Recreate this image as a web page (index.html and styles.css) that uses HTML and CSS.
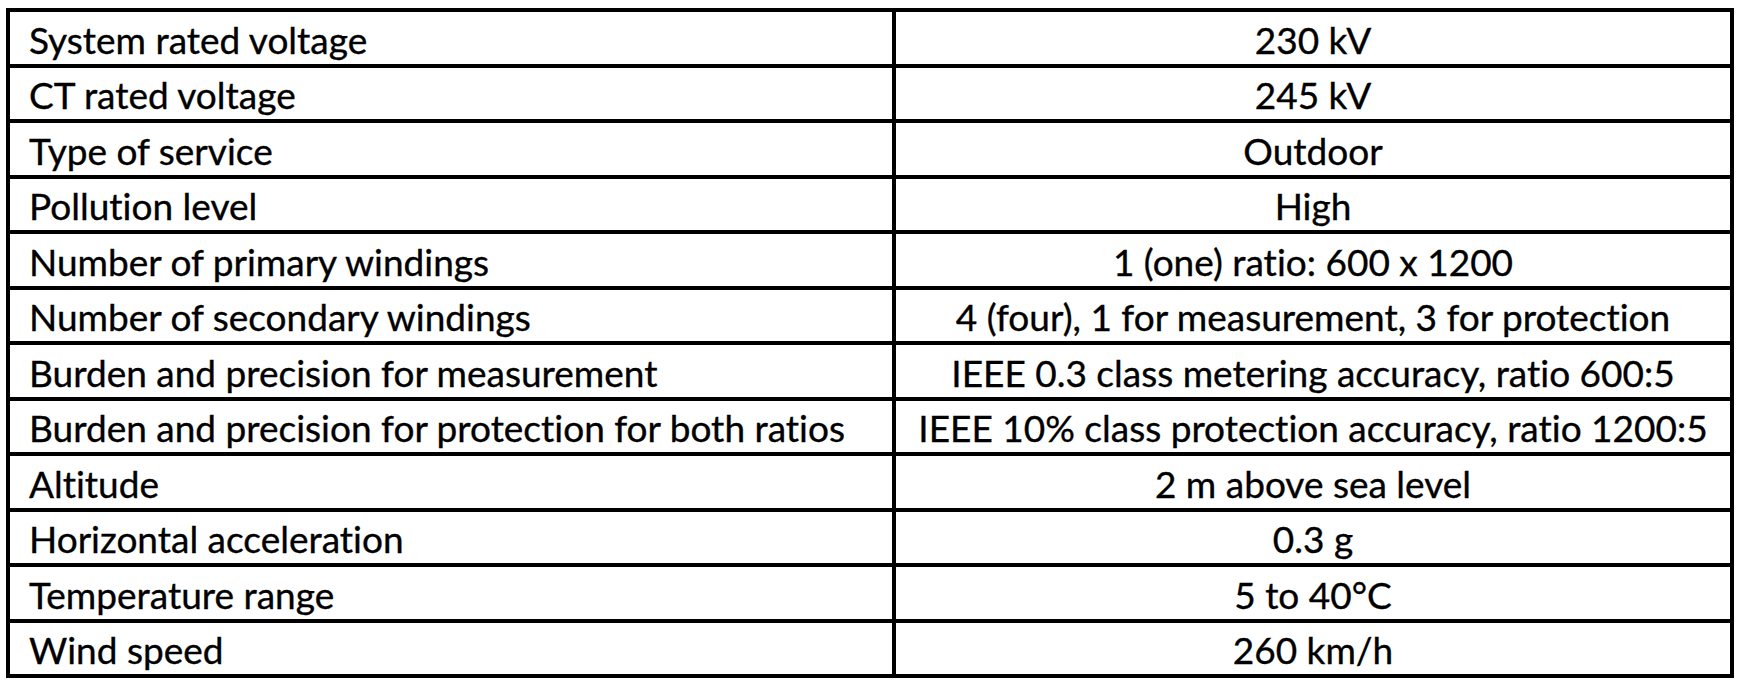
FILE: index.html
```html
<!DOCTYPE html>
<html lang="en">
<head>
<meta charset="utf-8">
<title>CT specifications</title>
<link rel="stylesheet" href="styles.css">
</head>
<body>
<table class="spec">
  <tbody>
    <tr><td class="label">System rated voltage</td><td class="value">230 kV</td></tr>
    <tr><td class="label">CT rated voltage</td><td class="value">245 kV</td></tr>
    <tr><td class="label">Type of service</td><td class="value">Outdoor</td></tr>
    <tr><td class="label">Pollution level</td><td class="value">High</td></tr>
    <tr><td class="label">Number of primary windings</td><td class="value">1 (one) ratio: 600 x 1200</td></tr>
    <tr><td class="label">Number of secondary windings</td><td class="value">4 (four), 1 for measurement, 3 for protection</td></tr>
    <tr><td class="label">Burden and precision for measurement</td><td class="value">IEEE 0.3 class metering accuracy, ratio 600:5</td></tr>
    <tr><td class="label">Burden and precision for protection for both ratios</td><td class="value">IEEE 10% class protection accuracy, ratio 1200:5</td></tr>
    <tr><td class="label">Altitude</td><td class="value">2 m above sea level</td></tr>
    <tr><td class="label">Horizontal acceleration</td><td class="value">0.3 g</td></tr>
    <tr><td class="label">Temperature range</td><td class="value">5 to 40°C</td></tr>
    <tr><td class="label">Wind speed</td><td class="value">260 km/h</td></tr>
  </tbody>
</table>
</body>
</html>
```

FILE: styles.css
```css
html, body {
  margin: 0;
  padding: 0;
  background: #ffffff;
}

body {
  padding: 8px 0 0 6px;
  font-family: "Lato", "Open Sans", sans-serif;
  color: #000000;
}

.spec {
  border-collapse: separate;
  border-spacing: 0;
  border-top: 4px solid #000000;
  border-left: 4px solid #000000;
  width: 1728px;
  table-layout: fixed;
}

.spec tr {
  height: 55.5px;
}

.spec td {
  border-right: 4px solid #000000;
  border-bottom: 4px solid #000000;
  font-size: 37px;
  line-height: 1;
  padding: 3px 0 0 19px;
  white-space: nowrap;
  vertical-align: middle;
  font-variant-ligatures: none;
  font-feature-settings: "liga" 0, "clig" 0;
  -webkit-text-stroke: 0.35px #000000;
}

.spec td.label {
  width: 863px;
}

.spec td.value {
  text-align: center;
  padding-left: 0;
}
```
